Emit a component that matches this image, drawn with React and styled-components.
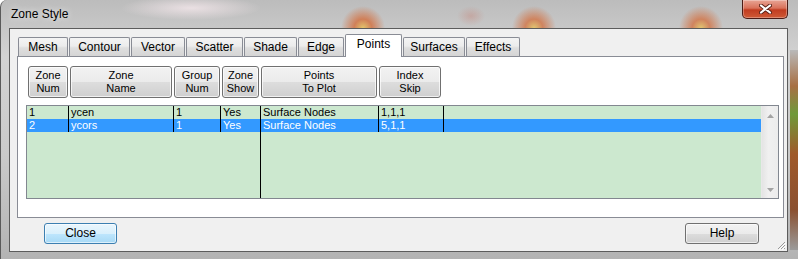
import React from "react";
import styled, { createGlobalStyle } from "styled-components";

const GlobalStyle = createGlobalStyle`
  *, *::before, *::after { box-sizing: border-box; }
  html, body { margin: 0; padding: 0; overflow: hidden; }
  body { font-family: "Liberation Sans", Arial, sans-serif; }
`;

const Window = styled.div`
  width: 798px;
  height: 259px;
  padding: 0 10px 7px 8px;
  display: flex;
  flex-direction: column;
  border-left: 1px solid #5a5a5a;
  border-top-left-radius: 7px;
  background:
    radial-gradient(22px 22px at 362px 28px, rgba(232, 196, 92, 0.85) 0%, rgba(212, 104, 52, 0.75) 40%, rgba(205, 120, 90, 0) 100%),
    radial-gradient(22px 22px at 533px 28px, rgba(232, 196, 92, 0.8) 0%, rgba(212, 104, 52, 0.7) 40%, rgba(205, 120, 90, 0) 100%),
    radial-gradient(22px 22px at 700px 28px, rgba(232, 196, 92, 0.8) 0%, rgba(212, 104, 52, 0.7) 40%, rgba(205, 120, 90, 0) 100%),
    radial-gradient(14px 10px at 470px 16px, rgba(200, 90, 70, 0.25), rgba(200, 90, 70, 0)),
    radial-gradient(70px 12px at 190px 8px, rgba(245, 232, 236, 0.8), rgba(245, 232, 236, 0)),
    linear-gradient(180deg, #b9b9b9 0%, #a87044 18%, #6f9a3a 32%, #a05a2a 52%, #8a5030 80%, #9b9b9b 100%) right 0 top 50px / 8px 200px no-repeat,
    linear-gradient(180deg, #bcbcbc 0%, #d3d3d3 22%, #cacaca 60%, #b3b3b3 100%);
`;

const TitleBar = styled.div`
  height: 28px;
  flex-shrink: 0;
  display: flex;
  align-items: flex-start;
`;

const Title = styled.span`
  margin: 7px 0 0 2px;
  font-size: 12px;
  line-height: 14px;
  color: #000;
  text-shadow: 0 0 6px rgba(255, 255, 255, 0.9);
`;

const CloseBox = styled.div`
  margin-left: auto;
  width: 46px;
  height: 19px;
  border: 1px solid #4b1c16;
  border-top: none;
  border-radius: 0 0 5px 5px;
  background: linear-gradient(180deg, #e8a595 0%, #d9715a 45%, #c13c20 55%, #cf5a36 100%);
  box-shadow: inset 0 0 0 1px rgba(255, 255, 255, 0.3);
  display: flex;
  align-items: center;
  justify-content: center;
`;

const Client = styled.div`
  position: relative;
  flex: 1;
  display: flex;
  flex-direction: column;
  background: #f0f0f0;
  border: 1px solid #5c5c5c;
  padding: 5px 3px 0 7px;
`;

const TabStrip = styled.div`
  height: 22px;
  flex-shrink: 0;
  display: flex;
  align-items: flex-end;
  gap: 1px;
  padding-left: 1px;
  position: relative;
  z-index: 1;
`;

const Tab = styled.div`
  width: ${(p) => p.$w}px;
  height: ${(p) => (p.$active ? 23 : 19)}px;
  margin-bottom: ${(p) => (p.$active ? -1 : 0)}px;
  border: 1px solid #898c95;
  border-bottom: none;
  border-radius: 2px 2px 0 0;
  background: ${(p) =>
    p.$active
      ? "#ffffff"
      : "linear-gradient(180deg, #f4f4f4 0%, #ececec 45%, #dedede 55%, #d5d5d5 100%)"};
  font-size: 12px;
  line-height: ${(p) => (p.$active ? 19 : 18)}px;
  text-align: center;
  color: #000;
`;

const Panel = styled.div`
  flex: 1;
  display: flex;
  flex-direction: column;
  background: #fff;
  border: 1px solid #898c95;
  padding: 9px 4px 0 8px;
`;

const HeaderRow = styled.div`
  display: flex;
  gap: 2px;
  padding-left: 2px;
`;

const HeaderButton = styled.div`
  width: ${(p) => p.$w}px;
  height: 32px;
  border: 1px solid #707070;
  border-radius: 3px;
  background: linear-gradient(180deg, #f2f2f2 0%, #ebebeb 50%, #dddddd 51%, #cfcfcf 100%);
  box-shadow: inset 0 0 0 1px rgba(255, 255, 255, 0.7);
  display: flex;
  flex-direction: column;
  justify-content: center;
  text-align: center;
  font-size: 11px;
  line-height: 13px;
  color: #000;
`;

const List = styled.div`
  margin-top: 7px;
  height: 94px;
  display: flex;
  border: 1px solid #828790;
  background: #cce8cf;
`;

const Rows = styled.div`
  flex: 1;
  display: flex;
  flex-direction: column;
`;

const Row = styled.div`
  height: 13px;
  display: flex;
  background: ${(p) => (p.$selected ? "#3399ff" : "transparent")};
  color: ${(p) => (p.$selected ? "#ffffff" : "#000000")};
`;

const Cell = styled.div`
  width: ${(p) => (p.$w ? `${p.$w}px` : "auto")};
  flex: ${(p) => (p.$w ? "none" : 1)};
  border-right: ${(p) => (p.$w ? "1px solid #000" : "none")};
  padding-left: 2px;
  font-size: 11px;
  line-height: 13px;
  white-space: nowrap;
  overflow: hidden;
`;

const Filler = styled.div`
  flex: 1;
  display: flex;
`;

const FillerLine = styled.div`
  width: 234px;
  border-right: 1px solid #000;
`;

const ScrollBar = styled.div`
  width: 17px;
  display: flex;
  flex-direction: column;
  justify-content: space-between;
  align-items: center;
  padding: 8px 0 6px;
  background: linear-gradient(90deg, #e4e4e4 0%, #f0f0f0 40%, #ececec 100%);
  border-left: 1px solid #e8e8e8;
`;

const Footer = styled.div`
  height: 33px;
  flex-shrink: 0;
  display: flex;
  align-items: flex-start;
  justify-content: space-between;
  padding: 5px 25px 0 27px;
`;

const DialogButton = styled.div`
  width: ${(p) => p.$w}px;
  height: 21px;
  border: 1px solid ${(p) => (p.$default ? "#3c7fb1" : "#707070")};
  border-radius: 3px;
  background: ${(p) =>
    p.$default
      ? "linear-gradient(180deg, #eaf6fd 0%, #d9f0fc 50%, #bee6fd 51%, #a7d9f5 100%)"
      : "linear-gradient(180deg, #f2f2f2 0%, #ebebeb 50%, #dddddd 51%, #cfcfcf 100%)"};
  box-shadow: inset 0 0 0 1px rgba(255, 255, 255, 0.6);
  font-size: 12px;
  line-height: 19px;
  text-align: center;
  color: #000;
`;

const Grip = styled.svg`
  position: absolute;
  right: 1px;
  bottom: 1px;
`;

const tabs = [
  ["Mesh", 50],
  ["Contour", 61],
  ["Vector", 54],
  ["Scatter", 57],
  ["Shade", 53],
  ["Edge", 46],
  ["Points", 57],
  ["Surfaces", 62],
  ["Effects", 54],
];

const headers = [
  ["Zone", "Num", 40],
  ["Zone", "Name", 102],
  ["Group", "Num", 46],
  ["Zone", "Show", 37],
  ["Points", "To Plot", 116],
  ["Index", "Skip", 62],
];

const colWidths = [42, 105, 47, 40, 118, 65];

const zones = [
  ["1", "ycen", "1", "Yes", "Surface Nodes", "1,1,1"],
  ["2", "ycors", "1", "Yes", "Surface Nodes", "5,1,1"],
];

const Arrow = ({ down }) => (
  <svg width="7" height="4" viewBox="0 0 7 4">
    <path d={down ? "M0 0 L7 0 L3.5 4 Z" : "M0 4 L7 4 L3.5 0 Z"} fill="#a3a3a3" />
  </svg>
);

export default function App() {
  return (
    <>
      <GlobalStyle />
      <Window>
        <TitleBar>
          <Title>Zone Style</Title>
          <CloseBox>
            <svg width="13" height="10" viewBox="0 0 13 10">
              <path d="M2 1.5 L11 8.5 M11 1.5 L2 8.5" stroke="#5a2218" strokeWidth="4" strokeLinecap="round" />
              <path d="M2 1.5 L11 8.5 M11 1.5 L2 8.5" stroke="#ffffff" strokeWidth="2.2" strokeLinecap="round" />
            </svg>
          </CloseBox>
        </TitleBar>
        <Client>
          <TabStrip>
            {tabs.map(([name, w]) => (
              <Tab key={name} $w={w} $active={name === "Points"}>
                {name}
              </Tab>
            ))}
          </TabStrip>
          <Panel>
            <HeaderRow>
              {headers.map(([a, b, w]) => (
                <HeaderButton key={a + b} $w={w}>
                  <span>{a}</span>
                  <span>{b}</span>
                </HeaderButton>
              ))}
            </HeaderRow>
            <List>
              <Rows>
                {zones.map((z, i) => (
                  <Row key={z[0]} $selected={i === 1}>
                    {z.map((v, j) => (
                      <Cell key={j} $w={colWidths[j]}>
                        {v}
                      </Cell>
                    ))}
                    <Cell />
                  </Row>
                ))}
                <Filler>
                  <FillerLine />
                </Filler>
              </Rows>
              <ScrollBar>
                <Arrow />
                <Arrow down />
              </ScrollBar>
            </List>
          </Panel>
          <Footer>
            <DialogButton $w={73} $default>
              Close
            </DialogButton>
            <DialogButton $w={74}>Help</DialogButton>
          </Footer>
          <Grip width="10" height="10" viewBox="0 0 10 10">
            <path d="M9 2 L2 9 M9 5 L5 9 M9 8 L8 9" stroke="#9a9a9a" strokeWidth="1" />
            <path d="M10 3 L3 10 M10 6 L6 10" stroke="#ffffff" strokeWidth="1" />
          </Grip>
        </Client>
      </Window>
    </>
  );
}
